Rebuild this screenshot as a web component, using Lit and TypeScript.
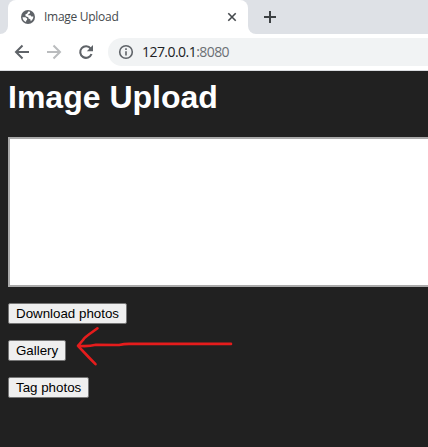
import { LitElement, html, css } from "lit";
import { customElement } from "lit/decorators.js";

@customElement("app-root")
export class AppRoot extends LitElement {
  static styles = css`
    :host { display: block; width: 100%; height: 100vh; overflow: hidden; background: #212121; font-family: "Liberation Sans", Arial, sans-serif; }
    * { box-sizing: border-box; }
    svg { display: block; flex: none; fill: none; }
    .strip { height: 34px; background: #dee1e6; display: flex; }
    .edge { width: 8px; background: #fff; flex: none; }
    .edge i { display: block; height: 34px; background: #dee1e6; }
    .edge.left i { border-bottom-right-radius: 8px; }
    .edge.right i { border-bottom-left-radius: 8px; }
    .tab { width: 240px; background: #fff; border-radius: 8px 8px 0 0; display: flex; align-items: center; padding: 0 11px 0 13px; }
    .title { font: 12px/16px "Open Sans", "Noto Sans", sans-serif; color: #45494d; margin-left: 9px; flex: 1; letter-spacing: -0.28px; }
    .plus { margin: 11px 0 0 8px; }
    .toolbar { height: 37px; background: #fff; border-bottom: 1px solid #dadce0; display: flex; align-items: center; padding-left: 14px; }
    .fwd, .reload { margin-left: 16px; }
    .omni { flex: 1; height: 28px; margin-left: 14px; background: #f1f3f4; border-radius: 14px 0 0 14px; display: flex; align-items: center; padding-left: 10px; }
    .url { font: 14px/18px "Open Sans", "Noto Sans", sans-serif; color: #202124; margin-left: 8px; letter-spacing: -0.55px; }
    .port { color: #6b6f74; }
    main { padding: 8px 0 0 8px; }
    h1 { margin: 0; font-size: 32px; line-height: 37px; color: #fff; }
    .drop { height: 150px; margin-top: 21px; background: #fff; border: 2px solid #aaa; border-right: 0; }
    .row { display: flex; margin-top: 16px; }
    button { font: 13.333px/15px "Liberation Sans", Arial, sans-serif; height: 21px; padding: 1px 7px; margin: 0; border: 1px solid #767676; border-radius: 2px; background: #efefef; color: #000; white-space: nowrap; }
    .arrow { position: absolute; left: 74px; top: 322px; }
  `;

  render() {
    return html`
      <div class="strip">
        <div class="edge left"><i></i></div>
        <div class="tab">
          <svg width="14" height="14" viewBox="0 0 14 14">
            <circle cx="7" cy="7" r="7" fill="#5f6368"/>
            <path fill="#fff" d="M7.200 1.500L9 1.800 9 3.200 7.400 4.200 7.200 5.200 9.500 5.300 10.300 6.500 12.400 6.600C12.300 8.600 11.300 10.300 9.800 11.200L9.300 9.300 7.500 8.500 7.300 7.300 4.600 6.300 4.300 4.600 6.200 3.500zM1.500 7.300L4.500 7.300 6.200 8.500 6 10 5.200 10.400 5 12.100C3 11.300 1.600 9.500 1.500 7.300z"/>
          </svg>
          <span class="title">Image Upload</span>
          <svg width="10" height="10" viewBox="0 0 10 10" stroke="#45494d" stroke-width="1.6"><path d="M1.300 1.300l7.400 7.400M8.700 1.300L1.300 8.700"/></svg>
        </div>
        <div class="edge right"><i></i></div>
        <svg class="plus" width="12" height="12" viewBox="0 0 12 12" stroke="#3c4043" stroke-width="2"><path d="M6 0v12M0 6h12"/></svg>
      </div>
      <div class="toolbar">
        <svg width="16" height="16" viewBox="0 0 16 16" stroke="#5f6368" stroke-width="2"><path d="M15 8H2.400M8.500 1.500L2 8l6.500 6.500"/></svg>
        <svg class="fwd" width="16" height="16" viewBox="0 0 16 16" stroke="#babcbe" stroke-width="2"><path d="M1 8h12.600M7.500 1.500L14 8l-6.500 6.500"/></svg>
        <svg class="reload" width="16" height="16" viewBox="0 0 16 16"><path d="M12.700 4.600A5.800 5.800 0 1 0 13.500 10" stroke="#5f6368" stroke-width="2.100"/><path d="M15 1v6.200H8.800z" fill="#5f6368"/></svg>
        <div class="omni">
          <svg width="16" height="16" viewBox="0 0 16 16" stroke="#5f6368" stroke-width="1.600"><circle cx="8" cy="8" r="6.300"/><path d="M8 7.200v4.300M8 4.300v1.600"/></svg>
          <span class="url">127.0.0.1<span class="port">:8080</span></span>
        </div>
      </div>
      <main>
        <h1>Image Upload</h1>
        <div class="drop"></div>
        <div class="row"><button>Download photos</button></div>
        <div class="row"><button>Gallery</button></div>
        <div class="row"><button>Tag photos</button></div>
      </main>
      <svg class="arrow" width="162" height="46" viewBox="74 322 162 46" stroke="#e51c1c" stroke-width="2.600" stroke-linecap="round" stroke-linejoin="round">
        <path d="M97.500 328.300C93 332 86 335.500 83 340L78 345.800L89 357.500L95.500 364.200M78 345.800C86 346.500 91 346 96 344.800L119 345Q124 344 129 343.900H231"/>
      </svg>
    `;
  }
}
